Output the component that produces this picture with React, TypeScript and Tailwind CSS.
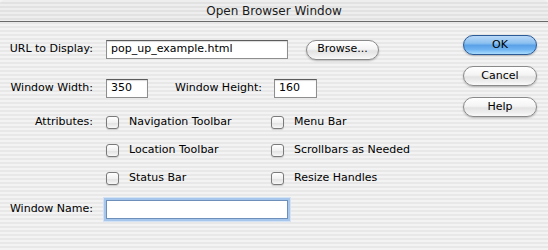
import React from "react";

const stripes =
  "bg-[repeating-linear-gradient(180deg,#f3f3f3_0px,#f3f3f3_2px,#e8e8e8_2px,#e8e8e8_4px)]";

function Input({ value, w, focus }: { value?: string; w: string; focus?: boolean }) {
  const look = focus
    ? "border-[#6d8fba] shadow-[0_0_0_2px_#a6c6ec,0_0_0_3px_#d3e3f5]"
    : "border-[#8e8e8e] border-t-[#5c5c5c] shadow-[inset_0_1px_1px_rgba(0,0,0,0.15)]";
  return (
    <div className={`${w} h-[19px] bg-white border ${look} flex items-center pl-[4px] text-[11px] text-black`}>
      {value}
    </div>
  );
}

function Checkbox({ label }: { label: string }) {
  return (
    <div className="flex items-center h-[19px]">
      <div className="w-[13px] h-[13px] rounded-[3px] border border-[#7a7a7a] bg-[linear-gradient(180deg,#ffffff_0%,#f0f0f0_50%,#e2e2e2_55%,#f7f7f7_100%)] shadow-[0_1px_1px_rgba(0,0,0,0.15)]" />
      <span className="ml-[10px] text-[11px] text-black">{label}</span>
    </div>
  );
}

function AquaButton({ label, w, primary }: { label: string; w: string; primary?: boolean }) {
  return (
    <div
      className={`${w} h-[20px] rounded-full border flex items-center justify-center text-[11px] text-black shadow-[0_1px_2px_rgba(0,0,0,0.25)] ${
        primary
          ? "border-[#2b5a97] bg-[linear-gradient(180deg,#b9d8f7_0%,#8cc0f0_40%,#5aa1e8_52%,#6fb3f2_75%,#a9dcfc_100%)]"
          : "border-[#8a8a8a] bg-[linear-gradient(180deg,#ffffff_0%,#f4f4f4_45%,#e3e3e3_55%,#eeeeee_80%,#fafafa_100%)]"
      }`}
    >
      {label}
    </div>
  );
}

function Label({ children }: { children: React.ReactNode }) {
  return <div className="w-[93px] mr-[13px] text-right text-[11px] text-black shrink-0">{children}</div>;
}

export default function App() {
  return (
    <div
      className={`w-[548px] h-[250px] ${stripes} overflow-hidden`}
      style={{ fontFamily: '"DejaVu Sans", sans-serif' }}
    >
      <div className="h-[22px] border-b border-[#6a6a6a] flex items-center justify-center text-[12px] text-[#1a1a1a] rounded-t-[5px] bg-[repeating-linear-gradient(180deg,#eeeeee_0px,#eeeeee_2px,#e2e2e2_2px,#e2e2e2_4px)]">
        Open Browser Window
      </div>
      <div className="flex">
        <div className="flex flex-col pt-[18px]">
          <div className="flex items-center h-[19px]">
            <Label>URL to Display:</Label>
            <Input value="pop_up_example.html" w="w-[182px]" />
            <div className="ml-[18px]">
              <AquaButton label="Browse..." w="w-[73px]" />
            </div>
          </div>
          <div className="flex items-center h-[19px] mt-[20px]">
            <Label>Window Width:</Label>
            <Input value="350" w="w-[42px]" />
            <div className="ml-[27px] mr-[12px] text-[11px] text-black">Window Height:</div>
            <Input value="160" w="w-[43px]" />
          </div>
          <div className="flex mt-[15px]">
            <div className="flex flex-col">
              <div className="flex items-center h-[19px]">
                <Label>Attributes:</Label>
              </div>
            </div>
            <div className="grid grid-cols-[165px_auto] gap-y-[9px]">
              <Checkbox label="Navigation Toolbar" />
              <Checkbox label="Menu Bar" />
              <Checkbox label="Location Toolbar" />
              <Checkbox label="Scrollbars as Needed" />
              <Checkbox label="Status Bar" />
              <Checkbox label="Resize Handles" />
            </div>
          </div>
          <div className="flex items-center h-[19px] mt-[12px]">
            <Label>Window Name:</Label>
            <Input w="w-[182px]" focus />
          </div>
        </div>
        <div className="ml-auto mr-[11px] pt-[13px] flex flex-col gap-[11px]">
          <AquaButton label="OK" w="w-[74px]" primary />
          <AquaButton label="Cancel" w="w-[74px]" />
          <AquaButton label="Help" w="w-[74px]" />
        </div>
      </div>
    </div>
  );
}
